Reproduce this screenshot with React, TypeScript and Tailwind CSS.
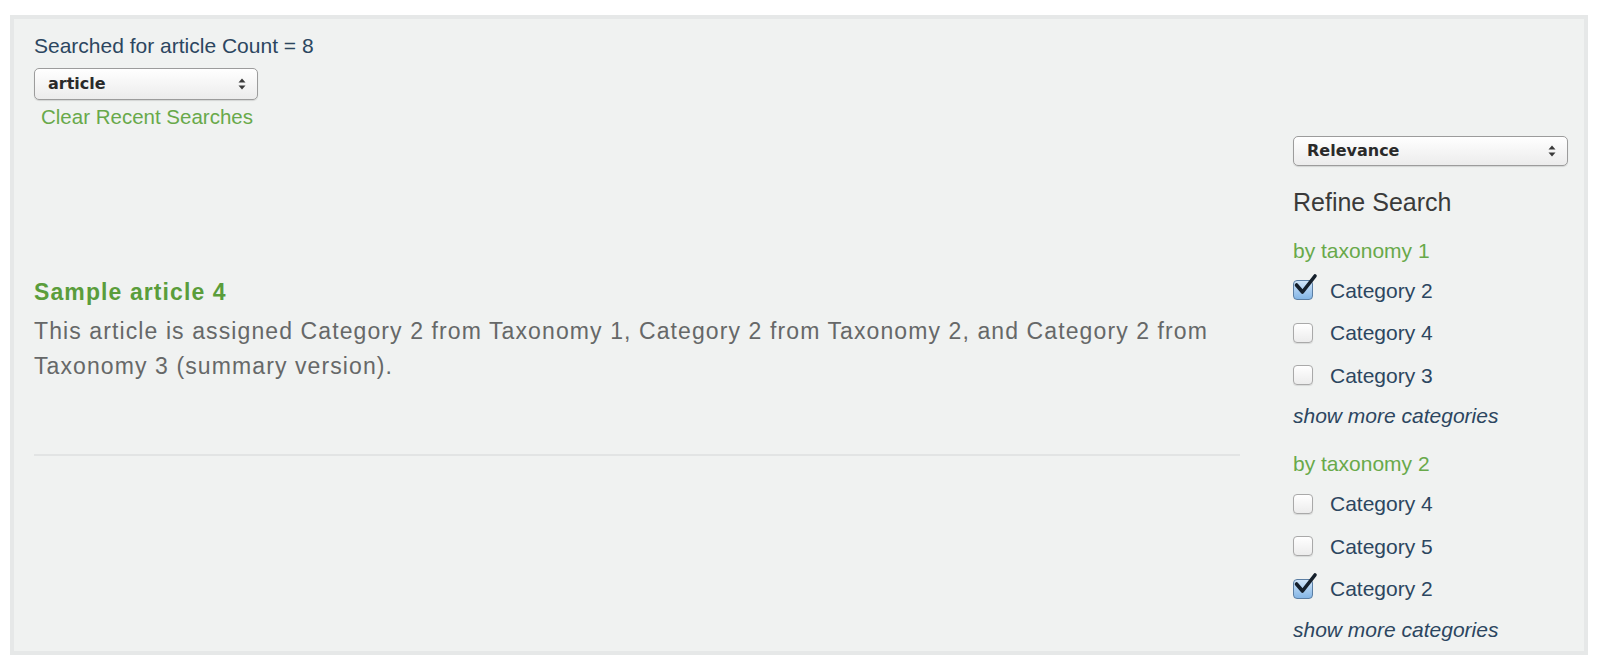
import { ReactNode } from 'react';

const sans = { fontFamily: '"Liberation Sans", Arial, sans-serif' };

function SelectBox({ value, width, height }: { value: string; width: string; height: string }) {
  return (
    <div
      className={`${width} ${height} flex items-center justify-between rounded-[5px] border border-[#9c9c9c] bg-gradient-to-b from-white to-[#ececec] pl-[13px] pr-[11px] shadow-[0_1px_1px_rgba(0,0,0,0.12)]`}
    >
      <span className="text-[16px] font-bold text-[#2a2a2a]" style={{ fontFamily: '"DejaVu Sans", sans-serif' }}>
        {value}
      </span>
      <svg width="8" height="12" viewBox="0 0 8 12">
        <path d="M4 0.5 L7.5 4.5 L0.5 4.5 Z" fill="#3a3a3a" />
        <path d="M4 11.5 L7.5 7.5 L0.5 7.5 Z" fill="#3a3a3a" />
      </svg>
    </div>
  );
}

function Checkbox({ checked }: { checked?: boolean }) {
  if (!checked) {
    return (
      <div className="h-[20px] w-[20px] rounded-[4px] border border-[#a9a9a9] bg-gradient-to-b from-white to-[#ececec] shadow-[0_1px_1px_rgba(0,0,0,0.1)]" />
    );
  }
  return (
    <div className="relative h-[20px] w-[20px] rounded-[4px] border border-[#5b7ea3] bg-gradient-to-b from-[#cfe4f8] to-[#84b6e6]">
      <svg className="absolute -left-[1px] -top-[9px]" width="26" height="30" viewBox="0 0 26 30">
        <path d="M3.5 13 L9.5 20 L22 4" fill="none" stroke="#15202c" strokeWidth="3.6" strokeLinecap="round" strokeLinejoin="round" />
      </svg>
    </div>
  );
}

function Row({ checked, children }: { checked?: boolean; children: ReactNode }) {
  return (
    <div className="flex h-[42.5px] items-center">
      <Checkbox checked={checked} />
      <span className="ml-[17px] text-[21px] text-[#2c4660]">{children}</span>
    </div>
  );
}

export default function App() {
  return (
    <div className="h-[668px] w-[1600px] bg-white pl-[10px] pt-[15px]" style={sans}>
      <div className="h-[640px] w-[1578px] border-[4px] border-[#e6e8e8] shadow-[inset_0_0_0_1px_#d8dada]">
        <div className="h-full bg-[#f0f2f1] pl-[20px] pr-[14px] pt-[14px]">
          <div className="text-[21px] leading-[26px] text-[#2c4660]">Searched for article Count = 8</div>
          <div className="mt-[9px]">
            <SelectBox value="article" width="w-[224px]" height="h-[32px]" />
          </div>
          <a href="#" className="ml-[7px] mt-[5px] block text-[20.5px] leading-[24px] text-[#68a94a]">
            Clear Recent Searches
          </a>

          <div className="mt-[7px] flex">
            <div className="w-[1206px] pt-[142px]">
              <h3 className="text-[23px] font-bold leading-[28px] tracking-[1.1px] text-[#5a9d3b]">Sample article 4</h3>
              <p className="mt-[8px] text-[23px] leading-[34.5px] tracking-[1.1px] text-[#666868]">
                This article is assigned Category 2 from Taxonomy 1, Category 2 from Taxonomy 2, and Category 2 from
                Taxonomy 3 (summary version).
              </p>
              <div className="mt-[71px] h-[2px] bg-[#e2e4e4]" />
            </div>

            <div className="ml-[53px] w-[275px]">
              <SelectBox value="Relevance" width="w-[275px]" height="h-[30px]" />
              <h2 className="mt-[21px] text-[25px] leading-[30px] text-[#3a3a3a]">Refine Search</h2>

              <div className="mt-[21px] text-[21px] leading-[26px] text-[#68a94a]">by taxonomy 1</div>
              <div className="mt-[5px]">
                <Row checked>Category 2</Row>
                <Row>Category 4</Row>
                <Row>Category 3</Row>
              </div>
              <a href="#" className="mt-[6px] block text-[21px] italic leading-[26px] text-[#2c4660]">
                show more categories
              </a>

              <div className="mt-[22px] text-[21px] leading-[26px] text-[#68a94a]">by taxonomy 2</div>
              <div className="mt-[6px]">
                <Row>Category 4</Row>
                <Row>Category 5</Row>
                <Row checked>Category 2</Row>
              </div>
              <a href="#" className="mt-[7px] block text-[21px] italic leading-[26px] text-[#2c4660]">
                show more categories
              </a>
            </div>
          </div>
        </div>
      </div>
    </div>
  );
}
